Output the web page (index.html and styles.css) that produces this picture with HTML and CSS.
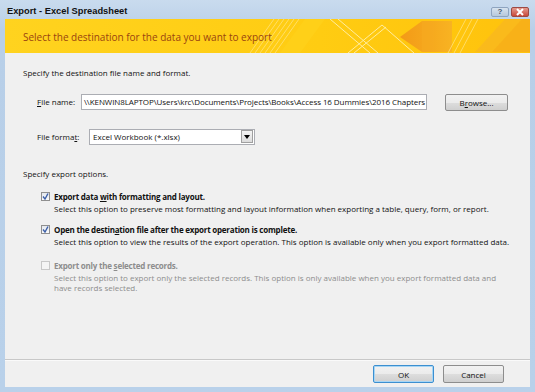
FILE: index.html
```html
<!DOCTYPE html>
<html>
<head>
<meta charset="utf-8">
<link rel="stylesheet" href="styles.css">
</head>
<body>
<div class="window">
  <div class="titlebar">
    <span class="title">Export - Excel Spreadsheet</span>
    <div class="caption-buttons">
      <span class="cap-btn help">?</span>
      <span class="cap-btn close">
        <svg width="10" height="8" viewBox="0 0 10 8"><path d="M2 1 L8 7 M8 1 L2 7" stroke="#fff" stroke-width="2"/></svg>
      </span>
    </div>
  </div>
  <div class="client">
    <div class="banner">
      <span class="banner-text">Select the destination for the data you want to export</span>
      <svg class="banner-art" width="300" height="34" viewBox="0 0 300 34">
        <defs>
          <linearGradient id="arrowg" x1="0" y1="0" x2="1" y2="0">
            <stop offset="0" stop-color="#f39a17"/>
            <stop offset="1" stop-color="#f8b322"/>
          </linearGradient>
        </defs>
        <g stroke="#ffe27a" stroke-width="1" opacity="0.8">
          <line x1="20" y1="34" x2="44" y2="0"/>
          <line x1="25" y1="34" x2="49" y2="0"/>
          <line x1="30" y1="34" x2="54" y2="0"/>
          <line x1="35" y1="34" x2="59" y2="0"/>
          <line x1="40" y1="34" x2="64" y2="0"/>
          <line x1="45" y1="34" x2="69" y2="0"/>
        </g>
        <polygon points="50,34 75,0 95,0 70,34" fill="#ffd21c" opacity="0.6"/>
        <g stroke="#fff1b0" stroke-width="1" opacity="0.9">
          <line x1="100" y1="0" x2="140" y2="34"/>
          <line x1="108" y1="0" x2="148" y2="34"/>
          <line x1="118" y1="34" x2="152" y2="6"/>
          <line x1="124" y1="34" x2="156" y2="8"/>
          <line x1="152" y1="6" x2="184" y2="34"/>
        </g>
        <polygon points="170,18 192,2 222,2 222,33 192,33" fill="url(#arrowg)"/>
        <polygon points="192,2 204,2 204,33 192,33" fill="#f6aa1f" opacity="0.7"/>
        <g stroke="#ffe27a" stroke-width="1" opacity="0.8">
          <line x1="218" y1="34" x2="236" y2="0"/>
          <line x1="224" y1="34" x2="242" y2="0"/>
          <line x1="230" y1="34" x2="248" y2="0"/>
        </g>
        <polygon points="245,33 275,0 300,0 300,33" fill="#f9b81e" opacity="0.85"/>
        <polygon points="262,33 292,0 300,0 300,33" fill="#f7ab17" opacity="0.6"/>
      </svg>
    </div>
    <div class="content">
      <p class="section">Specify the destination file name and format.</p>
      <div class="field-row name-row">
        <label class="lbl lbl-name"><u>F</u>ile name:</label>
        <div class="textbox">\\KENWIN8LAPTOP\Users\krc\Documents\Projects\Books\Access 16 Dummies\2016 Chapters</div>
        <button class="btn browse">B<u>r</u>owse...</button>
      </div>
      <div class="field-row format-row">
        <label class="lbl lbl-format">File forma<u>t</u>:</label>
        <div class="select">
          <span class="select-text">Excel Workbook (*.xlsx)</span>
          <span class="select-btn"><svg width="6" height="4" viewBox="0 0 6 4"><polygon points="0,0 6,0 3,4" fill="#000"/></svg></span>
        </div>
      </div>
      <p class="section options-head">Specify export options.</p>
      <div class="option">
        <span class="check checked"><svg width="7" height="7" viewBox="0 0 7 7"><path d="M1 3.5 L3 6 L6 0.5" stroke="#3c5fa8" stroke-width="1.4" fill="none"/></svg></span>
        <div class="opt-body">
          <div class="opt-label">Export data <u>w</u>ith formatting and layout.</div>
          <div class="opt-desc">Select this option to preserve most formatting and layout information when exporting a table, query, form, or report.</div>
        </div>
      </div>
      <div class="option">
        <span class="check checked"><svg width="7" height="7" viewBox="0 0 7 7"><path d="M1 3.5 L3 6 L6 0.5" stroke="#3c5fa8" stroke-width="1.4" fill="none"/></svg></span>
        <div class="opt-body">
          <div class="opt-label">Open the destin<u>a</u>tion file after the export operation is complete.</div>
          <div class="opt-desc">Select this option to view the results of the export operation. This option is available only when you export formatted data.</div>
        </div>
      </div>
      <div class="option disabled">
        <span class="check"></span>
        <div class="opt-body">
          <div class="opt-label">Export only the <u>s</u>elected records.</div>
          <div class="opt-desc">Select this option to export only the selected records. This option is only available when you export formatted data and<br>have records selected.</div>
        </div>
      </div>
    </div>
    <div class="footer">
      <button class="btn ok">OK</button>
      <button class="btn cancel">Cancel</button>
    </div>
  </div>
</div>
</body>
</html>
```

FILE: styles.css
```css
* { box-sizing: border-box; }
html, body { margin: 0; padding: 0; }
body {
  width: 535px;
  height: 392px;
  overflow: hidden;
  font-family: "Open Sans", "Noto Sans", sans-serif;
  font-size: 8px;
  color: #111;
}
.window {
  width: 535px;
  height: 392px;
  display: flex;
  flex-direction: column;
  background: linear-gradient(#c9dbee, #b8cfe8 30px, #b9d1ea);
}
.titlebar {
  height: 19px;
  flex: none;
  display: flex;
  align-items: center;
  justify-content: space-between;
  padding: 0 6px 0 7px;
}
.title {
  font-family: "Liberation Sans", Arial, sans-serif;
  font-weight: bold;
  font-size: 9.3px;
  color: #111;
  margin-top: 3px;
}
.caption-buttons {
  display: flex;
  gap: 2px;
  margin-top: 4px;
}
.cap-btn {
  width: 18px;
  height: 10px;
  display: flex;
  align-items: center;
  justify-content: center;
  border-radius: 2px;
}
.help {
  background: linear-gradient(#d7e3ef, #b6c8dc);
  border: 1px solid #8ea4bf;
  color: #4a5a70;
  font-family: "Liberation Sans", Arial, sans-serif;
  font-weight: bold;
  font-size: 8px;
}
.close {
  background: linear-gradient(#e49a8e, #c8493a);
  border: 1px solid #9b4a44;
}
.client {
  flex: 1;
  margin: 0 5px 5px 5px;
  background: #f0f0f0;
  display: flex;
  flex-direction: column;
}
.banner {
  position: relative;
  height: 34px;
  flex: none;
  background: linear-gradient(90deg, #ffd31f, #ffcc12 60%, #ffc20c);
  display: flex;
  align-items: center;
  padding-left: 18px;
  overflow: hidden;
}
.banner-text {
  position: relative;
  z-index: 1;
  font-size: 10px;
  color: #9a4410;
  margin-top: 1px;
}
.banner-art {
  position: absolute;
  right: 0;
  top: 0;
}
.content {
  flex: 1;
  padding: 14px 0 0 18px;
}
.section {
  margin: 0;
  line-height: 11px;
}
.field-row {
  display: flex;
  align-items: center;
}
.name-row {
  margin-top: 14px;
  height: 19px;
}
.format-row {
  margin-top: 17px;
  height: 17px;
}
.lbl {
  padding-left: 14px;
  flex: none;
}
.lbl-name { width: 58px; }
.lbl-format { width: 66px; }
.textbox {
  width: 346px;
  height: 16px;
  background: #fff;
  border: 1px solid #abadb3;
  padding: 0 0 0 2px;
  line-height: 14px;
  letter-spacing: -0.08px;
  white-space: nowrap;
  overflow: hidden;
}
.btn {
  font-family: "Open Sans", "Noto Sans", sans-serif;
  font-size: 8px;
  color: #111;
  padding: 0;
  height: 18px;
  border: 1px solid #8d8d8d;
  border-radius: 2px;
  background: linear-gradient(#f2f2f2, #ebebeb 50%, #dddddd 51%, #cfcfcf);
}
.browse {
  width: 63px;
  margin-left: 18px;
  margin-top: 2px;
  height: 17px;
}
.select {
  width: 166px;
  height: 16px;
  background: #fff;
  border: 1px solid #abadb3;
  display: flex;
  align-items: center;
  justify-content: space-between;
  padding: 0 1px 0 3px;
}
.select-btn {
  width: 12px;
  height: 13px;
  border: 1px solid #a0a0a0;
  background: linear-gradient(#f4f4f4, #dcdcdc);
  display: flex;
  align-items: center;
  justify-content: center;
}
.options-head {
  margin-top: 23px;
}
.option {
  display: flex;
  align-items: flex-start;
  padding-left: 18px;
  margin-top: 12px;
}
.option + .option { margin-top: 10px; }
.option + .option.disabled { margin-top: 13px; }
.check {
  width: 9px;
  height: 9px;
  flex: none;
  margin-top: 1px;
  border: 1px solid #8f8f8f;
  background: linear-gradient(#e4e8ee, #fafafa);
  display: flex;
  align-items: center;
  justify-content: center;
}
.opt-body {
  margin-left: 4px;
}
.opt-label {
  font-weight: bold;
  line-height: 11px;
  letter-spacing: -0.22px;
  white-space: nowrap;
}
.opt-desc {
  margin-top: 2px;
  line-height: 10px;
  white-space: nowrap;
}
.disabled { color: #8d8d8d; }
.disabled .check {
  border-color: #c8c8c8;
  background: #f4f4f4;
}
.footer {
  flex: none;
  height: 28px;
  border-top: 1px solid #c8c8c8;
  box-shadow: inset 0 1px 0 #fafafa;
  display: flex;
  justify-content: flex-end;
  align-items: flex-start;
  padding: 5px 26px 0 0;
  gap: 9px;
}
.ok, .cancel { width: 61px; }
.ok {
  border-color: #3c8fd0;
  box-shadow: inset 0 0 0 1px #a7d6f5;
}
```
